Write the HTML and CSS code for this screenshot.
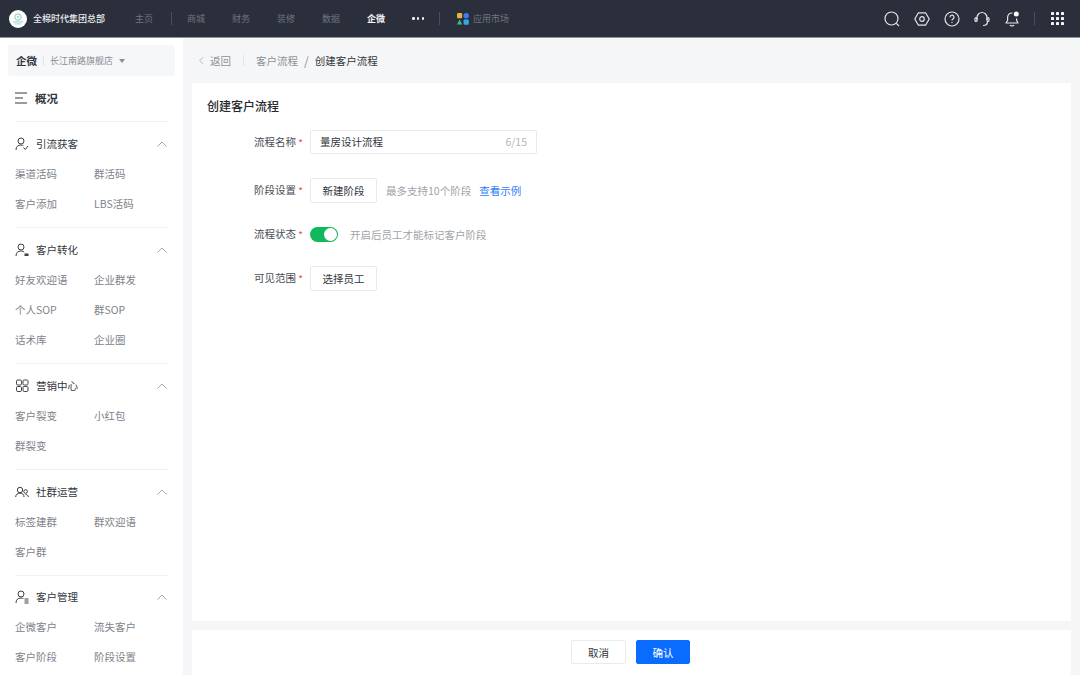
FILE: index.html
```html
<!DOCTYPE html>
<html lang="zh-CN">
<head>
    <meta charset="UTF-8">
    <meta name="viewport" content="width=device-width, initial-scale=1.0">
    <title>创建客户流程</title>
    <link rel="stylesheet" href="styles.css">
</head>
<body>

    <header class="topbar">
        <div class="brand">
            <svg class="brand-logo" viewBox="0 0 18 18">
                <circle cx="9" cy="9" r="9" fill="#fff"/>
                <circle cx="9" cy="7" r="3.2" fill="none" stroke="#7cc4b8" stroke-width=".9"/>
                <circle cx="9" cy="7" r="1.2" fill="#a5dad0"/>
                <rect x="4" y="11.4" width="10" height="1" fill="#8fd0c4"/>
                <rect x="5.5" y="13.4" width="7" height="1" fill="#a5dad0"/>
            </svg>
            <span>全棉时代集团总部</span>
        </div>
        <nav class="topnav">
            <a>主页</a>
            <i class="topnav-line"></i>
            <a>商城</a>
            <a>财务</a>
            <a>装修</a>
            <a>数据</a>
            <a class="active">企微</a>
            <span class="dots"><b></b><b></b><b></b></span>
            <i class="topnav-line topnav-line-more"></i>
            <a class="market">
                <svg width="12" height="12" viewBox="0 0 12 12">
                    <rect x="0" y="0" width="5.2" height="5.2" rx="1" fill="#e8b23c"/>
                    <circle cx="9.2" cy="2.7" r="2.7" fill="#3d7df0"/>
                    <path d="M0 11.6 L2.6 6.6 L5.2 11.6 Z" fill="#35c47c"/>
                    <rect x="6.6" y="6.6" width="5.2" height="5.2" rx="1" fill="#35a8e8"/>
                </svg>
                应用市场
            </a>
        </nav>
        <div class="tools">
            <svg class="tool" viewBox="0 0 16 16"><circle cx="7.5" cy="7.5" r="6.5"/><path d="M12.4 12.4 L15 15"/></svg>
            <svg class="tool" viewBox="0 0 16 16"><path d="M0.8 8 L4.4 1.8 H11.6 L15.2 8 L11.6 14.2 H4.4 Z"/><circle cx="8" cy="8" r="2.3"/></svg>
            <svg class="tool" viewBox="0 0 16 16"><circle cx="8" cy="8" r="7"/><path d="M6 6.3 A2 2 0 1 1 8.9 8 C8.2 8.4 8 8.8 8 9.6"/><path d="M8 11 V12"/></svg>
            <svg class="tool" viewBox="0 0 16 16"><path d="M3 9 V6.5 A5 5 0 0 1 13 6.5 V9"/><rect x="1" y="6.5" width="2" height="4" rx="1"/><rect x="13" y="6.5" width="2" height="4" rx="1"/><path d="M13.5 10.5 C13.5 13 11.5 14.5 9 14.5"/></svg>
            <svg class="tool" viewBox="0 0 16 16"><path d="M8.5 2 C5.5 1.8 3.6 3.8 3.6 6.5 V9.5 L2 12 H14 L12.6 9.5 V7.5"/><path d="M6 14 C6.5 15.2 9.5 15.2 10 14"/><circle class="tool-dot" cx="12.3" cy="3" r="2.5"/></svg>
            <i class="tools-line"></i>
            <svg class="apps" viewBox="0 0 13 13">
                <rect x="0" y="0" width="3" height="3" rx=".6"/><rect x="5" y="0" width="3" height="3" rx=".6"/><rect x="10" y="0" width="3" height="3" rx=".6"/>
                <rect x="0" y="5" width="3" height="3" rx=".6"/><rect x="5" y="5" width="3" height="3" rx=".6"/><rect x="10" y="5" width="3" height="3" rx=".6"/>
                <rect x="0" y="10" width="3" height="3" rx=".6"/><rect x="5" y="10" width="3" height="3" rx=".6"/><rect x="10" y="10" width="3" height="3" rx=".6"/>
            </svg>
        </div>
    </header>

    <div class="layout">
        <aside class="sidebar">
            <div class="shop">
                <strong>企微</strong>
                <i class="shop-line"></i>
                <span>长江南路旗舰店</span>
                <i class="shop-arrow"></i>
            </div>
            <div class="overview">
                <svg width="12" height="12" viewBox="0 0 12 12"><path d="M0 1 H12 M0 6 H8 M0 11 H12" stroke="#33363d" stroke-width="1" fill="none"/></svg>
                概况
            </div>

            <section class="menu">
                <div class="menu-head">
                    <svg class="menu-icon" viewBox="0 0 14 14"><circle cx="6" cy="4" r="3"/><path d="M1 13 C1 9.5 3 8 6 8 C7 8 7.8 8.2 8.4 8.5"/><path d="M8.5 10.5 L10.3 12.5 L13 9"/></svg>
                    <span>引流获客</span>
                    <svg class="chevron" viewBox="0 0 10 6"><path d="M0.5 5.5 L5 1 L9.5 5.5"/></svg>
                </div>
                <div class="menu-items">
                    <a>渠道活码</a><a>群活码</a>
                    <a>客户添加</a><a>LBS活码</a>
                </div>
            </section>

            <section class="menu">
                <div class="menu-head">
                    <svg class="menu-icon" viewBox="0 0 14 14"><circle cx="6" cy="4" r="3"/><path d="M1 13 C1 9.5 3 8 6 8 C7.5 8 8.5 8.4 9.2 9"/><rect class="menu-icon-fill" x="9.5" y="10.5" width="4" height="2.5"/></svg>
                    <span>客户转化</span>
                    <svg class="chevron" viewBox="0 0 10 6"><path d="M0.5 5.5 L5 1 L9.5 5.5"/></svg>
                </div>
                <div class="menu-items">
                    <a>好友欢迎语</a><a>企业群发</a>
                    <a>个人SOP</a><a>群SOP</a>
                    <a>话术库</a><a>企业圈</a>
                </div>
            </section>

            <section class="menu">
                <div class="menu-head">
                    <svg class="menu-icon" viewBox="0 0 14 14"><rect x="1.5" y="1" width="5" height="5" rx="1.2"/><rect x="8" y="1" width="5" height="5" rx="1.2"/><rect x="1.5" y="7.5" width="5" height="5" rx="1.2"/><rect x="8" y="7.5" width="5" height="5" rx="1.2"/></svg>
                    <span>营销中心</span>
                    <svg class="chevron" viewBox="0 0 10 6"><path d="M0.5 5.5 L5 1 L9.5 5.5"/></svg>
                </div>
                <div class="menu-items">
                    <a>客户裂变</a><a>小红包</a>
                    <a>群裂变</a>
                </div>
            </section>

            <section class="menu">
                <div class="menu-head">
                    <svg class="menu-icon" viewBox="0 0 14 14"><circle cx="5" cy="5" r="2.7"/><path d="M0.7 12 C0.7 9.5 2.5 8.2 5 8.2 C7.5 8.2 9 9.5 9 12"/><circle cx="10.6" cy="6.5" r="1.8"/><path d="M10.5 9.5 C12 9.5 13.4 10.5 13.4 12"/></svg>
                    <span>社群运营</span>
                    <svg class="chevron" viewBox="0 0 10 6"><path d="M0.5 5.5 L5 1 L9.5 5.5"/></svg>
                </div>
                <div class="menu-items">
                    <a>标签建群</a><a>群欢迎语</a>
                    <a>客户群</a>
                </div>
            </section>

            <section class="menu menu-last">
                <div class="menu-head">
                    <svg class="menu-icon" viewBox="0 0 14 14"><circle cx="6" cy="4" r="3"/><path d="M1 13 C1 9.5 3 8 6 8 C7 8 7.8 8.2 8.4 8.5"/><path d="M9.5 9 H13.5 M9.5 11 H13.5 M9.5 13 H13.5"/></svg>
                    <span>客户管理</span>
                    <svg class="chevron" viewBox="0 0 10 6"><path d="M0.5 5.5 L5 1 L9.5 5.5"/></svg>
                </div>
                <div class="menu-items">
                    <a>企微客户</a><a>流失客户</a>
                    <a>客户阶段</a><a>阶段设置</a>
                </div>
            </section>
        </aside>

        <main class="content">
            <div class="crumbs">
                <svg class="crumbs-back" viewBox="0 0 6 10"><path d="M5 1 L1 5 L5 9"/></svg>
                <span class="crumbs-return">返回</span>
                <i class="crumbs-line"></i>
                <span class="crumbs-parent">客户流程</span>
                <span class="crumbs-slash">/</span>
                <span class="crumbs-current">创建客户流程</span>
            </div>

            <div class="card">
                <h2>创建客户流程</h2>
                <div class="form">
                    <div class="row">
                        <label class="req">流程名称</label>
                        <div class="input">
                            <span>量房设计流程</span>
                            <em>6/15</em>
                        </div>
                    </div>
                    <div class="row">
                        <label class="req">阶段设置</label>
                        <button class="btn">新建阶段</button>
                        <span class="hint hint-stage">最多支持10个阶段</span>
                        <a class="link">查看示例</a>
                    </div>
                    <div class="row row-switch">
                        <label class="req">流程状态</label>
                        <span class="switch"><i></i></span>
                        <span class="hint hint-switch">开启后员工才能标记客户阶段</span>
                    </div>
                    <div class="row">
                        <label class="req">可见范围</label>
                        <button class="btn">选择员工</button>
                    </div>
                </div>
            </div>

            <div class="footer">
                <button class="btn btn-footer">取消</button>
                <button class="btn btn-footer btn-primary">确认</button>
            </div>
        </main>
    </div>

</body>
</html>
```

FILE: styles.css
```css
* { box-sizing: border-box; }
html, body { height: 100%; }
body { margin: 0; overflow: hidden; font-family: "Noto Sans CJK SC", "Liberation Sans", sans-serif; font-size: 10.5px; color: #33363d; background: #f5f6f8; }
i, em { font-style: normal; }

.topbar { display: flex; align-items: center; height: 38px; background: #2b2f3b; border-bottom: 1px solid #8e9297; color: #fff; }
.brand { display: flex; align-items: center; gap: 6px; width: 135px; padding-left: 9px; font-size: 9px; font-weight: 500; color: #eceef0; }
.brand-logo { width: 18px; height: 18px; }
.topnav { display: flex; align-items: center; gap: 27px; font-size: 9px; color: #6f7480; }
.topnav .active { color: #f2f3f5; font-weight: 700; }
.topnav-line { width: 1px; height: 13px; background: #4a4e59; margin: 0 -12px 0 -9px; }
.topnav-line-more { margin: 0 -10px 0 -12px; }
.dots { display: flex; gap: 2.25px; width: 12px; }
.dots b { width: 2.5px; height: 2.5px; flex: none; border-radius: 50%; background: #f2f3f5; }
.market { display: flex; align-items: center; gap: 4px; }
.tools { display: flex; align-items: center; gap: 14px; margin-left: auto; padding-right: 16px; }
.tool { width: 16px; height: 16px; fill: none; stroke: #e3e5e8; stroke-width: 1.2; stroke-linejoin: round; }
.tool-dot { fill: #fff; stroke: none; }
.tools-line { width: 1px; height: 13px; background: #4a4e59; margin: 0 2px 0 0; }
.apps { width: 13px; height: 13px; fill: #f2f3f5; }

.layout { display: flex; height: 637px; }
.sidebar { width: 183px; flex: none; padding: 7px 8px 0; background: #fff; overflow: hidden; }
.shop { display: flex; align-items: center; height: 31px; padding-left: 8px; background: #f6f7f9; border-radius: 3px; font-size: 9px; color: #8a8d94; }
.shop strong { font-size: 10.5px; font-weight: 700; color: #33363d; }
.shop-line { width: 1px; height: 10px; background: #e2e4e8; margin: 0 6px; }
.shop-arrow { width: 0; height: 0; margin-left: 6px; border: 3.5px solid transparent; border-top: 4px solid #8a8d94; border-bottom: 0; }
.overview { display: flex; align-items: center; gap: 8px; height: 46px; margin: 0 7px; padding-bottom: 2px; border-bottom: 1px solid #eff0f2; font-size: 11.5px; font-weight: 700; color: #33363d; }

.menu { margin: 0 7px; padding: 7px 0 8px; border-bottom: 1px solid #eff0f2; }
.menu-last { border-bottom: 0; margin-top: -1px; }
.menu-head { display: flex; align-items: center; height: 30px; color: #33363d; }
.menu-head span { padding-bottom: 2px; }
.menu-icon { width: 14px; height: 14px; margin-right: 7px; fill: none; stroke: #3c3f46; stroke-width: 1; }
.menu-icon-fill { fill: #3c3f46; stroke: none; }
.chevron { width: 10px; height: 6px; margin-left: auto; margin-right: 1px; fill: none; stroke: #a4a7ad; stroke-width: 1; }
.menu-items { display: grid; grid-template-columns: 79px 1fr; grid-auto-rows: 30px; align-items: center; color: #80838a; }
.menu-items a { padding-bottom: 2px; }

.content { flex: 1; display: flex; flex-direction: column; padding: 0 9px 0 9px; min-width: 0; }
.crumbs { display: flex; align-items: center; height: 45px; padding-left: 7px; flex: none; color: #8f9298; }
.crumbs-back { width: 5px; height: 9px; margin-right: 6px; fill: none; stroke: #a4a7ad; stroke-width: 1; }
.crumbs-line { width: 1px; height: 11px; background: #e2e4e8; margin: 0 12px; }
.crumbs-slash { margin: 0 6px; font-size: 12px; }
.crumbs-current { color: #33363d; }

.card { height: 538px; flex: none; padding: 14px 15px 0; background: #fff; }
.card h2 { margin: 0; height: 17px; line-height: 17px; font-size: 12px; font-weight: 500; color: #26282d; }
.form { display: flex; flex-direction: column; gap: 24px; margin-top: 16px; }
.row { display: flex; align-items: center; height: 24px; }
.row-switch { height: 16px; }
.row label { flex: none; width: 103px; padding-right: 14px; padding-bottom: 1px; text-align: right; color: #4a4d54; position: relative; }
.req::after { content: "*"; position: absolute; right: 7px; top: 1px; color: #f0444a; font-size: 10px; }
.input { display: flex; align-items: center; justify-content: space-between; width: 227px; height: 24px; padding: 0 9px 1px; border: 1px solid #e9eaed; border-radius: 2px; color: #33363d; }
.input em { color: #b4b6bb; }
.btn { width: 67px; height: 25px; padding: 0; border: 1px solid #e9eaed; border-radius: 2px; background: #fff; font: inherit; color: #33363d; }
.hint { color: #a0a3a9; }
.hint-stage { margin-left: 9px; }
.hint-switch { margin-left: 12px; }
.link { margin-left: 8px; color: #2f7df6; }
.switch { display: flex; justify-content: flex-end; align-items: center; width: 28px; height: 15px; padding: 0 1px; border-radius: 8px; background: #12b85c; }
.switch i { width: 13px; height: 13px; border-radius: 50%; background: #fff; }

.footer { display: flex; justify-content: center; gap: 10px; height: 46px; flex: none; margin-top: 9px; padding: 10px 2px 0 0; background: #fff; }
.btn-footer { width: 55px; height: 24px; }
.btn-primary { width: 54px; background: #0a6cff; border-color: #0a6cff; color: #fff; }
```
